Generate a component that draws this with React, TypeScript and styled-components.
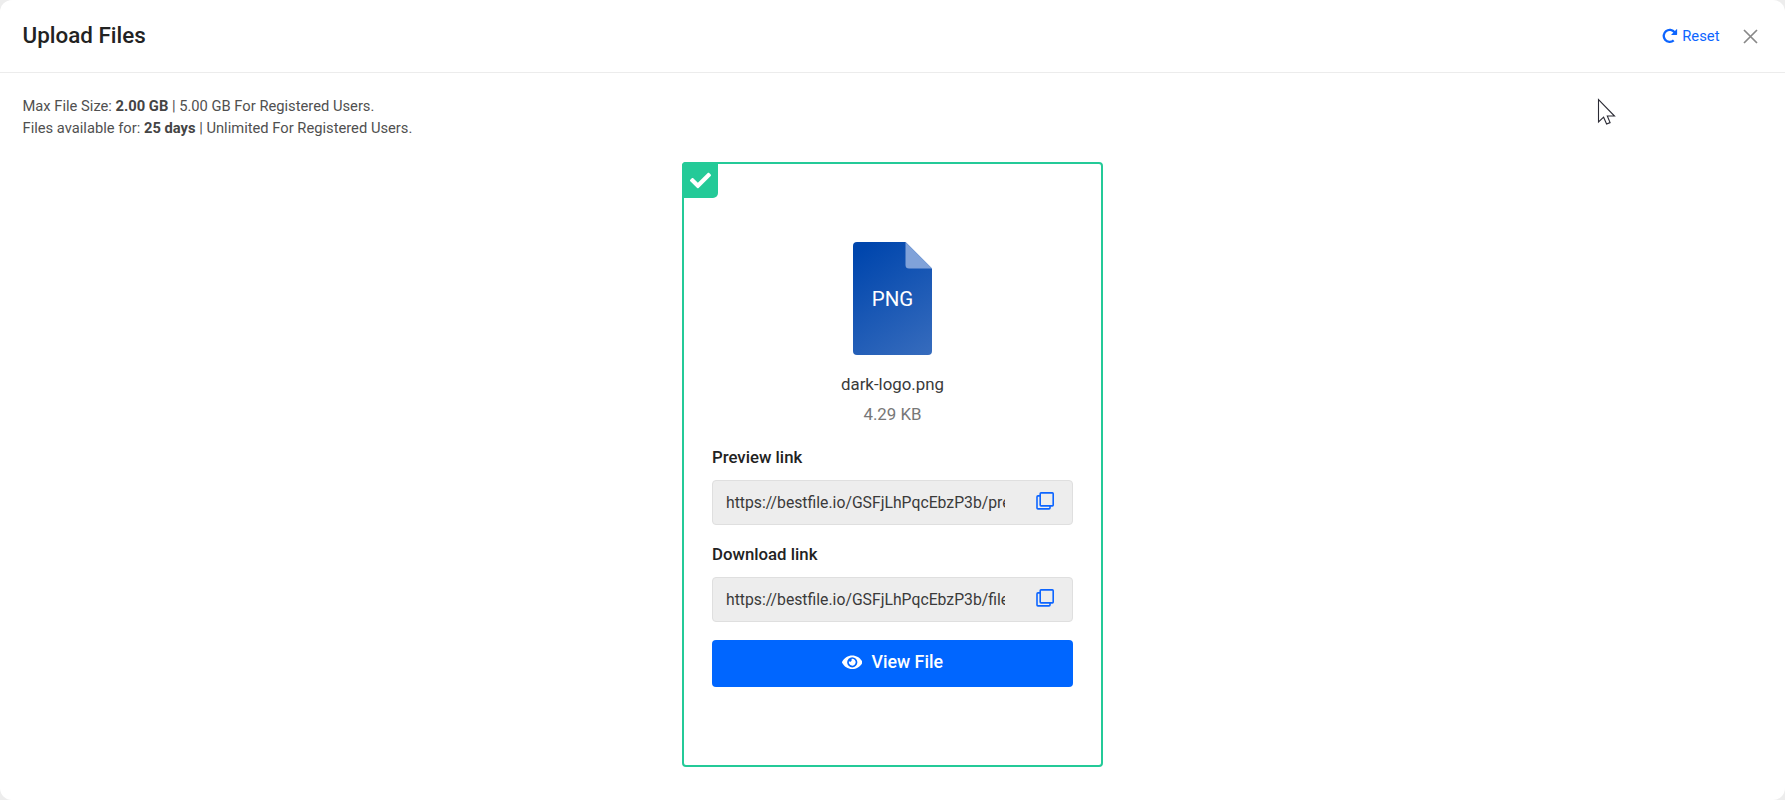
import React from "react";
import styled, { createGlobalStyle } from "styled-components";
import { FaCheck, FaEye } from "react-icons/fa";

const GlobalStyle = createGlobalStyle`
  * { box-sizing: border-box; }
  body {
    margin: 0;
    background: #ededed;
    font-family: Roboto, "Liberation Sans", sans-serif;
    color: #222;
  }
`;

const Dialog = styled.main`
  height: 800px;
  background: #fff;
  border-radius: 12px;
  overflow: hidden;
`;

const Header = styled.header`
  height: 73px;
  padding: 0 27px 0 22.5px;
  display: flex;
  align-items: center;
  border-bottom: 1px solid #ececec;
`;

const Title = styled.h1`
  margin: 0 auto 2px 0;
  font-size: 22.4px;
  line-height: 28px;
  font-weight: 500;
`;

const ResetButton = styled.button`
  display: flex;
  align-items: center;
  gap: 4.5px;
  padding: 0;
  margin: 0 23.5px 1px 0;
  border: 0;
  background: none;
  font: 400 14.8px/20px Roboto, sans-serif;
  color: #0d65ff;
`;

const CloseButton = styled.button`
  display: flex;
  padding: 0;
  border: 0;
  background: none;
  color: #888;
`;

const Limits = styled.div`
  padding: 22px 22.5px 0;
  height: 89px;
  font-size: 14.72px;
  line-height: 22px;
  color: #505050;

  p { margin: 0; }
  b { font-weight: 700; color: #444; }
`;

const Card = styled.section`
  position: relative;
  width: 421px;
  height: 605px;
  margin: 0 auto;
  padding: 78px 28px 0;
  border: 2px solid #24ca98;
  border-radius: 4px;
  display: flex;
  flex-direction: column;
  align-items: stretch;
`;

const Badge = styled.div`
  position: absolute;
  top: -2px;
  left: -2px;
  width: 35.5px;
  height: 35.5px;
  padding: 1px 0 0 1px;
  display: flex;
  align-items: center;
  justify-content: center;
  background: #24ca98;
  color: #fff;
  border-radius: 4px 0 5px 0;
`;

const FileIcon = styled.svg`
  display: block;
  align-self: center;
  width: 79px;
  height: 113px;
`;

const FileName = styled.div`
  margin-top: 16px;
  text-align: center;
  font-size: 16.85px;
  line-height: 26px;
  color: #3a3a3a;
`;

const FileSize = styled.div`
  margin-top: 4px;
  text-align: center;
  font-size: 16.85px;
  line-height: 26px;
  color: #777;
`;

const Label = styled.label<{ $gap: number }>`
  margin-top: ${(p) => p.$gap}px;
  font-size: 16.8px;
  line-height: 26px;
  font-weight: 500;
`;

const LinkField = styled.div`
  margin-top: 10px;
  height: 45px;
  display: flex;
  align-items: center;
  padding: 0 18px 0 13px;
  border: 1px solid #dfdfdf;
  border-radius: 4px;
  background: #ededed;
`;

const LinkText = styled.span`
  width: 279px;
  margin-right: auto;
  overflow: hidden;
  white-space: nowrap;
  font-size: 15.75px;
  line-height: 24px;
  color: #3a3a3a;
`;

const CopyIcon = styled.svg`
  width: 18px;
  height: 18px;
  margin-bottom: 4px;
  fill: none;
  stroke: #0d65ff;
  stroke-width: 1.6;
`;

const ViewButton = styled.button`
  margin-top: 18px;
  height: 47px;
  padding: 0 0 3px;
  display: flex;
  align-items: center;
  justify-content: center;
  gap: 9px;
  border: 0;
  border-radius: 4px;
  background: #06f;
  color: #fff;
  font: 500 17.8px/26px Roboto, sans-serif;
`;

const Pointer = styled.svg`
  position: absolute;
  left: 1597px;
  top: 98px;
  width: 20px;
  height: 28px;
`;

function LinkBox({ url }: { url: string }) {
  return (
    <LinkField>
      <LinkText>{url}</LinkText>
      <CopyIcon viewBox="0 0 18 18">
        <rect x="4.2" y="0.9" width="13" height="13" rx="0.8" />
        <path d="M4.2 3.9H2a1 1 0 0 0-1 1v11a1 1 0 0 0 1 1h11a1 1 0 0 0 1-1v-2" />
      </CopyIcon>
    </LinkField>
  );
}

export default function App() {
  return (
    <>
      <GlobalStyle />
      <Dialog>
        <Header>
          <Title>Upload Files</Title>
          <ResetButton>
            <svg width="15.5" height="15.5" viewBox="0 0 16 16">
              <path d="M13 4.4A6.2 6.2 0 1 0 12.1 12.7" fill="none" stroke="currentColor" strokeWidth="2.4" />
              <path d="M15.6 0.9V6.5a.6.6 0 0 1-.6.6H9.3Z" fill="currentColor" />
            </svg>
            Reset
          </ResetButton>
          <CloseButton aria-label="Close">
            <svg width="15" height="15" viewBox="0 0 15 15" stroke="currentColor" strokeWidth="1.7">
              <path d="M1 1l13 13M14 1L1 14" />
            </svg>
          </CloseButton>
        </Header>
        <Limits>
          <p>Max File Size: <b>2.00 GB</b> | 5.00 GB For Registered Users.</p>
          <p>Files available for: <b>25 days</b> | Unlimited For Registered Users.</p>
        </Limits>
        <Card>
          <Badge><FaCheck size={21} /></Badge>
          <FileIcon viewBox="0 0 79 113">
            <defs>
              <linearGradient id="sheet" x1="0" y1="0" x2="79" y2="113" gradientUnits="userSpaceOnUse">
                <stop offset="0.08" stopColor="#0046ad" />
                <stop offset="1" stopColor="#376cbd" />
              </linearGradient>
            </defs>
            <path d="M4 0H52.5L79 26.5V109a4 4 0 0 1-4 4H4a4 4 0 0 1-4-4V4a4 4 0 0 1 4-4Z" fill="url(#sheet)" />
            <path d="M52.5 0L79 26.5H56a3.5 3.5 0 0 1-3.5-3.5Z" fill="#80a2d9" />
            <text x="39.5" y="64" textAnchor="middle" fill="#fff" fontSize="20.5" fontFamily="Roboto, sans-serif">PNG</text>
          </FileIcon>
          <FileName>dark-logo.png</FileName>
          <FileSize>4.29 KB</FileSize>
          <Label $gap={17}>Preview link</Label>
          <LinkBox url="https://bestfile.io/GSFjLhPqcEbzP3b/preview" />
          <Label $gap={16}>Download link</Label>
          <LinkBox url="https://bestfile.io/GSFjLhPqcEbzP3b/file" />
          <ViewButton>
            <FaEye size={20.5} />
            View File
          </ViewButton>
        </Card>
      </Dialog>
      <Pointer viewBox="0 0 20 28" fill="#fff" stroke="#2b2b35" strokeWidth="1.1">
        <path d="M1.5 1.5V24L6.6 19.2L9.6 26L13.1 24.6L10.3 18H17.5Z" />
      </Pointer>
    </>
  );
}
